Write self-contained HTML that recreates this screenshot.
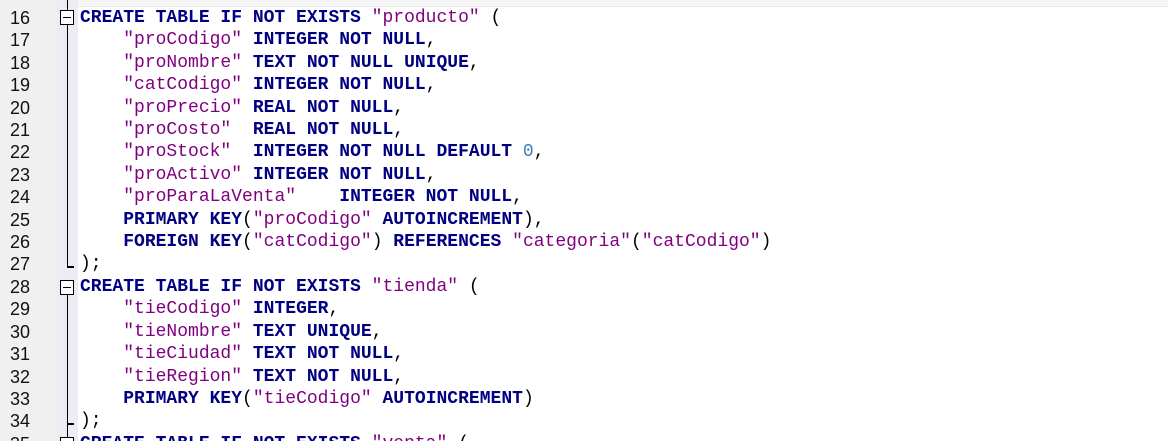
<!DOCTYPE html>
<html><head><meta charset="utf-8"><style>
html,body{margin:0;padding:0;width:1168px;height:441px;overflow:hidden;background:#fff;position:relative}
.gut{position:absolute;left:0;top:0;width:57px;height:441px;background:#f0f0f0}
.fold{position:absolute;left:57px;top:0;width:21px;height:441px;background:#ececf4}
.topbar{position:absolute;left:0;top:0;width:1168px;height:6px;background:#f6f6f6;border-bottom:1px solid #e8e8e8}
.ln{position:absolute;left:10px;font:18px "Liberation Sans",sans-serif;color:#111;line-height:22.4px}
.cd{position:absolute;left:80px;font:18px "Liberation Mono",monospace;line-height:22.4px;white-space:pre;color:#000}
.k{color:#000080;font-weight:bold}
.s{color:#800080}
.n{color:#3a7fc0}
.vl{position:absolute;left:67px;width:1px;background:#000}
.box{position:absolute;left:60px;width:14px;height:15px;border:1px solid #000;background:#fff;box-sizing:border-box}
.box::after{content:"";position:absolute;left:2px;right:2px;top:6px;height:1px;background:#000}
.tk{position:absolute;left:67px;width:7px;height:2px;background:#000}
</style></head><body>
<div class="topbar"></div>
<div class="gut"></div><div class="fold"></div>
<div class="vl" style="top:0;height:10px"></div>
<div class="vl" style="top:25px;height:242px"></div>
<div class="tk" style="top:266px"></div>
<div class="vl" style="top:295px;height:130px"></div>
<div class="tk" style="top:423px"></div>
<div class="vl" style="top:423px;height:18px"></div>
<div class="box" style="top:10px"></div>
<div class="box" style="top:280px"></div>
<div class="box" style="top:437px"></div>
<div class="ln" style="top:7px">16<br>17<br>18<br>19<br>20<br>21<br>22<br>23<br>24<br>25<br>26<br>27<br>28<br>29<br>30<br>31<br>32<br>33<br>34<br>35</div>
<div class="cd" style="top:7px"><span class="k">CREATE TABLE IF NOT EXISTS</span> <span class="s">"producto"</span> (
    <span class="s">"proCodigo"</span> <span class="k">INTEGER NOT NULL</span>,
    <span class="s">"proNombre"</span> <span class="k">TEXT NOT NULL UNIQUE</span>,
    <span class="s">"catCodigo"</span> <span class="k">INTEGER NOT NULL</span>,
    <span class="s">"proPrecio"</span> <span class="k">REAL NOT NULL</span>,
    <span class="s">"proCosto"</span>  <span class="k">REAL NOT NULL</span>,
    <span class="s">"proStock"</span>  <span class="k">INTEGER NOT NULL DEFAULT</span> <span class="n">0</span>,
    <span class="s">"proActivo"</span> <span class="k">INTEGER NOT NULL</span>,
    <span class="s">"proParaLaVenta"</span>    <span class="k">INTEGER NOT NULL</span>,
    <span class="k">PRIMARY KEY</span>(<span class="s">"proCodigo"</span> <span class="k">AUTOINCREMENT</span>),
    <span class="k">FOREIGN KEY</span>(<span class="s">"catCodigo"</span>) <span class="k">REFERENCES</span> <span class="s">"categoria"</span>(<span class="s">"catCodigo"</span>)
);
<span class="k">CREATE TABLE IF NOT EXISTS</span> <span class="s">"tienda"</span> (
    <span class="s">"tieCodigo"</span> <span class="k">INTEGER</span>,
    <span class="s">"tieNombre"</span> <span class="k">TEXT UNIQUE</span>,
    <span class="s">"tieCiudad"</span> <span class="k">TEXT NOT NULL</span>,
    <span class="s">"tieRegion"</span> <span class="k">TEXT NOT NULL</span>,
    <span class="k">PRIMARY KEY</span>(<span class="s">"tieCodigo"</span> <span class="k">AUTOINCREMENT</span>)
);
<span class="k">CREATE TABLE IF NOT EXISTS</span> <span class="s">"venta"</span> (</div>
</body></html>
